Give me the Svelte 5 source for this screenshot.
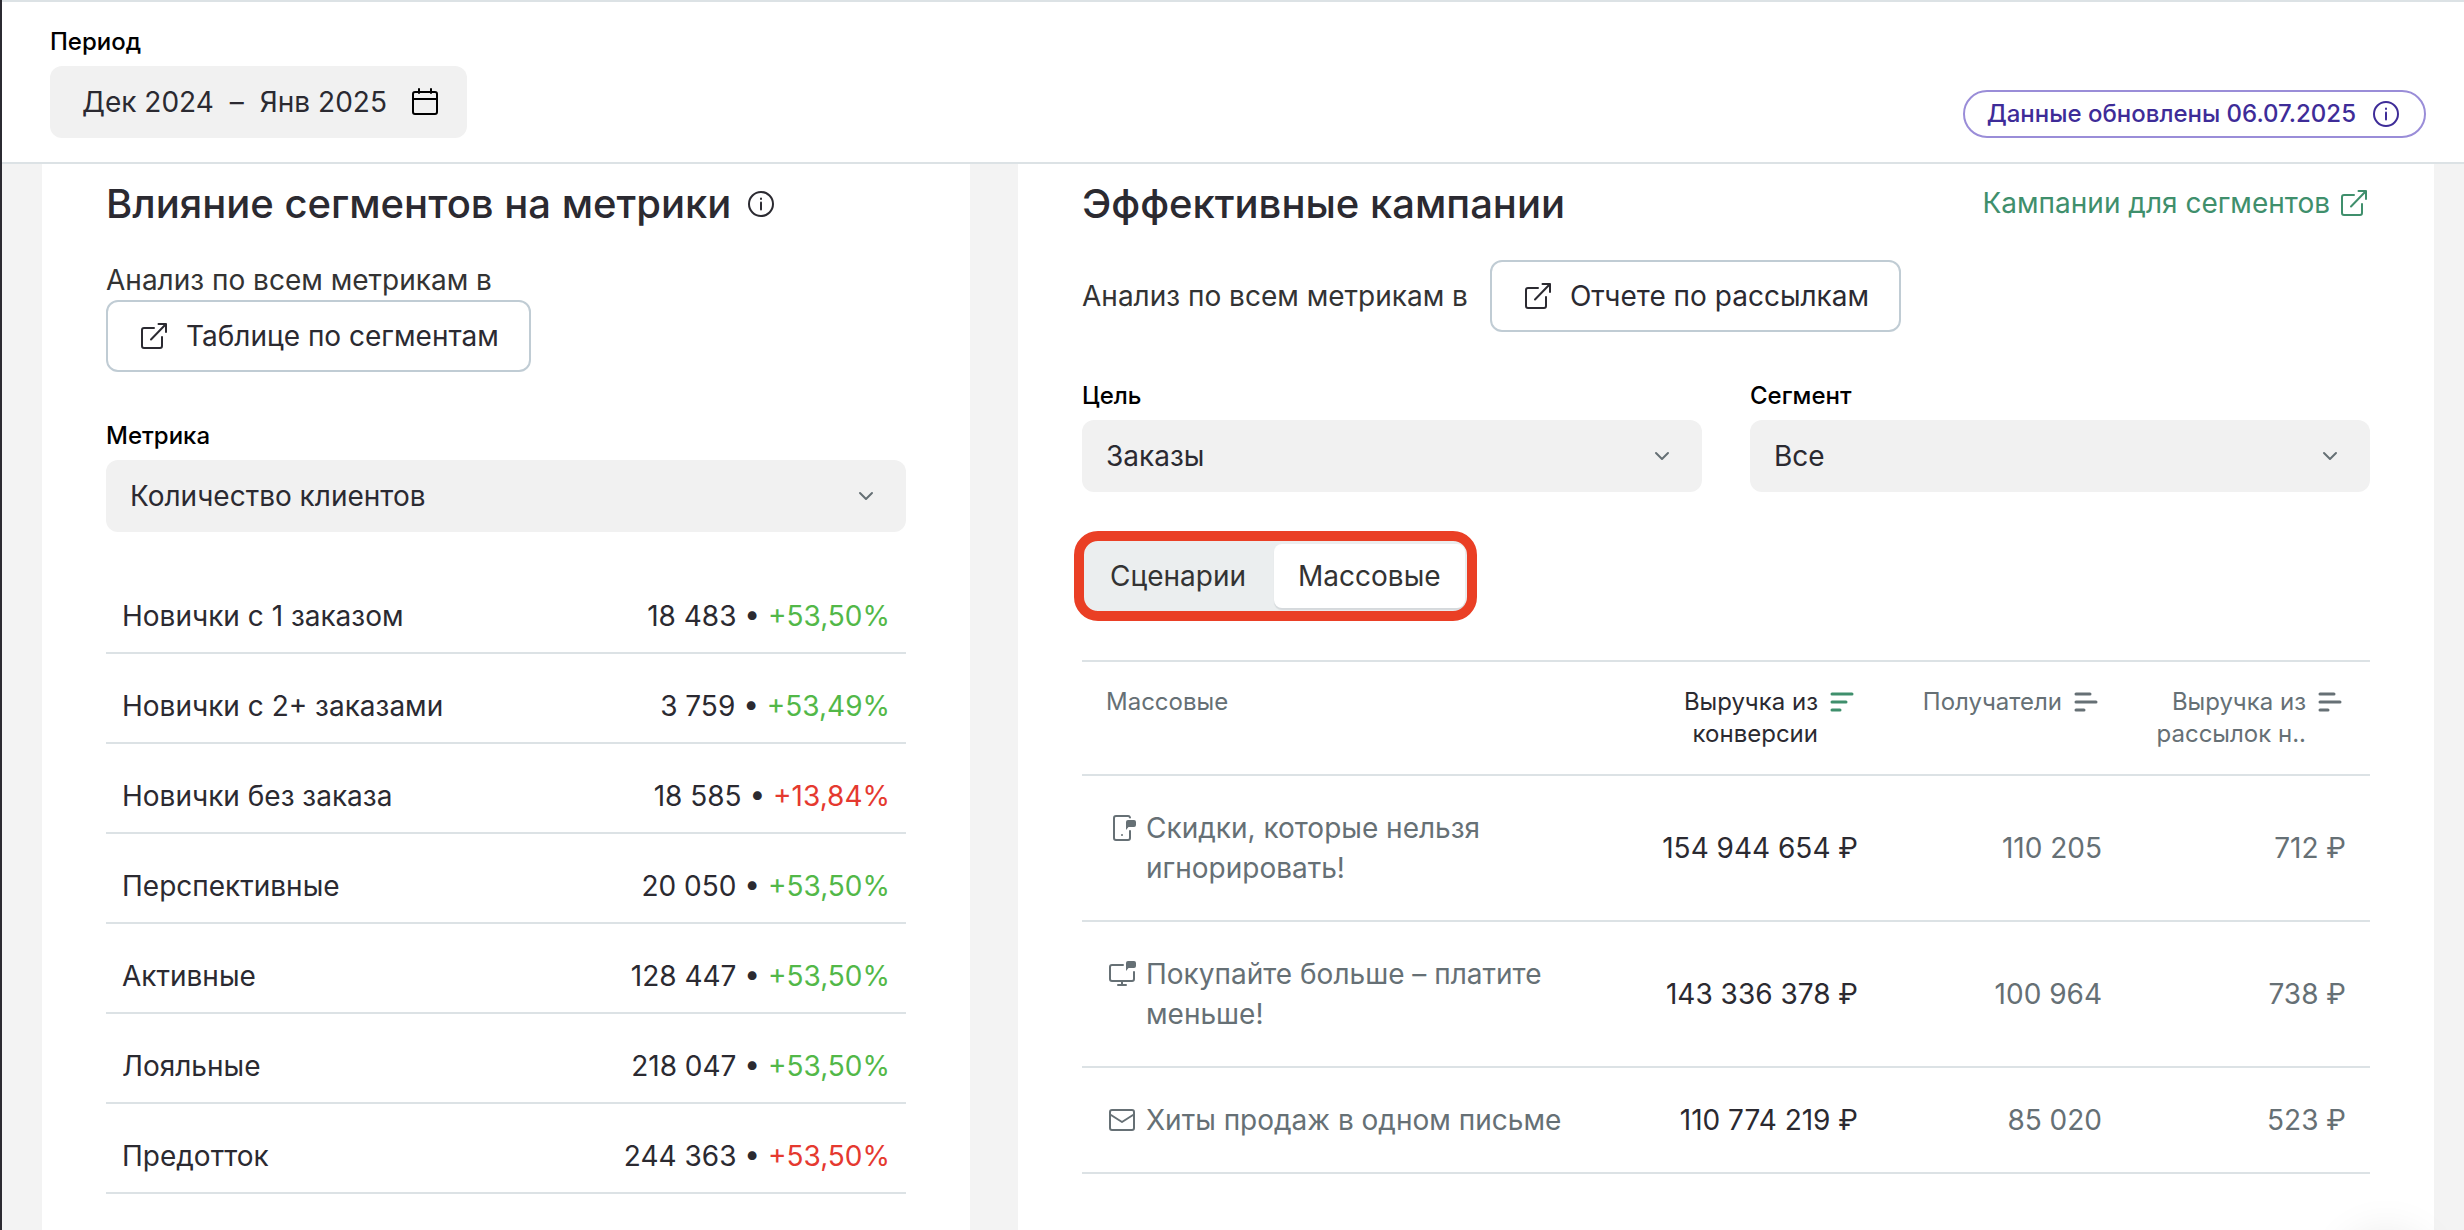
<script>
  let metric = $state('Количество клиентов');
  let goal = $state('Заказы');
  let segment = $state('Все');
  let tab = $state('Массовые');

  const tabs = ['Сценарии', 'Массовые'];

  const segments = [
    { name: 'Новички с 1 заказом', count: '18 483', change: '+53,50%', good: true },
    { name: 'Новички с 2+ заказами', count: '3 759', change: '+53,49%', good: true },
    { name: 'Новички без заказа', count: '18 585', change: '+13,84%', good: false },
    { name: 'Перспективные', count: '20 050', change: '+53,50%', good: true },
    { name: 'Активные', count: '128 447', change: '+53,50%', good: true },
    { name: 'Лояльные', count: '218 047', change: '+53,50%', good: true },
    { name: 'Предотток', count: '244 363', change: '+53,50%', good: false }
  ];

  const columns = [
    { title: 'Выручка из конверсии', active: true },
    { title: 'Получатели', active: false },
    { title: 'Выручка из рассылок н..', active: false }
  ];

  const campaigns = [
    { icon: 'mobile', name: 'Скидки, которые нельзя игнорировать!', revenue: '154 944 654 ₽', recipients: '110 205', perSend: '712 ₽' },
    { icon: 'web', name: 'Покупайте больше – платите меньше!', revenue: '143 336 378 ₽', recipients: '100 964', perSend: '738 ₽' },
    { icon: 'mail', name: 'Хиты продаж в одном письме', revenue: '110 774 219 ₽', recipients: '85 020', perSend: '523 ₽' }
  ];
</script>

{#snippet infoIcon()}
  <svg class="icon" viewBox="0 0 28 28" aria-hidden="true">
    <circle cx="14" cy="14" r="12" />
    <path d="M14 12.5v7" />
    <path d="M14 8.500v0.500" />
  </svg>
{/snippet}

{#snippet externalIcon()}
  <svg class="icon" viewBox="0 0 28 28" aria-hidden="true">
    <path d="M14 6H4a2 2 0 0 0-2 2v16a2 2 0 0 0 2 2h16a2 2 0 0 0 2-2V15" />
    <path d="M18.500 2H26v8M26 2L11 17.500" />
  </svg>
{/snippet}

{#snippet chevron()}
  <svg class="chevron" viewBox="0 0 16 16" aria-hidden="true"><path d="M2 5l6 6 6-6" /></svg>
{/snippet}

<div class="page">
  <header class="topbar">
    <div class="field">
      <label for="period">Период</label>
      <button id="period" class="period" type="button">
        <span>Дек 2024</span><span>–</span><span>Янв 2025</span>
        <svg class="icon calendar" viewBox="0 0 28 28" aria-hidden="true">
          <rect x="2" y="4" width="24" height="22" rx="2" />
          <path d="M2 11h24M8 1v4M20 1v4" />
        </svg>
      </button>
    </div>
    <div class="badge">
      <span>Данные обновлены 06.07.2025</span>
      {@render infoIcon()}
    </div>
  </header>

  <main>
    <section class="card">
      <div class="heading">
        <h2>Влияние сегментов на метрики</h2>
        {@render infoIcon()}
      </div>
      <div class="analysis stacked">
        <span>Анализ по всем метрикам в</span>
        <button class="outlined" type="button">{@render externalIcon()}Таблице по сегментам</button>
      </div>
      <div class="field">
        <label for="metric">Метрика</label>
        <div class="select">
          <select id="metric" bind:value={metric}><option>Количество клиентов</option></select>
          {@render chevron()}
        </div>
      </div>
      <ul class="segments">
        {#each segments as row}
          <li>
            <span>{row.name}</span>
            <span>{row.count} • <span class={row.good ? 'up' : 'down'}>{row.change}</span></span>
          </li>
        {/each}
      </ul>
    </section>

    <section class="card">
      <div class="heading spread">
        <h2>Эффективные кампании</h2>
        <a href="#campaigns">Кампании для сегментов {@render externalIcon()}</a>
      </div>
      <div class="analysis">
        <span>Анализ по всем метрикам в</span>
        <button class="outlined" type="button">{@render externalIcon()}Отчете по рассылкам</button>
      </div>
      <div class="filters">
        <div class="field">
          <label for="goal">Цель</label>
          <div class="select">
            <select id="goal" bind:value={goal}><option>Заказы</option></select>
            {@render chevron()}
          </div>
        </div>
        <div class="field">
          <label for="segment">Сегмент</label>
          <div class="select">
            <select id="segment" bind:value={segment}><option>Все</option></select>
            {@render chevron()}
          </div>
        </div>
      </div>
      <div class="tabs">
        {#each tabs as name}
          <button type="button" class:active={tab === name} aria-pressed={tab === name} onclick={() => (tab = name)}>{name}</button>
        {/each}
        <div class="marker"></div>
      </div>
      <table id="campaigns">
        <thead>
          <tr>
            <th class="name">Массовые</th>
            {#each columns as column}
              <th class:sorted={column.active}>
                <button class="sort" type="button">
                  <span>{column.title}</span>
                  <svg viewBox="0 0 32 32" aria-hidden="true">
                    <path d={column.active ? 'M6 8h20M6 16h14M6 24h8' : 'M6 8h14M6 16h20M6 24h8'} />
                  </svg>
                </button>
              </th>
            {/each}
          </tr>
        </thead>
        <tbody>
          {#each campaigns as row}
            <tr>
              <td>
                <div class="campaign">
                  <svg viewBox="0 0 32 32" aria-hidden="true">
                    {#if row.icon === 'mobile'}
                      <path d="M24 5.500a2 2 0 0 0-2-1.500H10a2 2 0 0 0-2 2v20a2 2 0 0 0 2 2h12a2 2 0 0 0 2-2V19" />
                      <circle class="dot" cx="16" cy="23" r="1" />
                      <path class="solid" d="M22 8h6a2 2 0 0 1 2 2v3a2 2 0 0 1-2 2h-5.500L20 18v-8a2 2 0 0 1 2-2z" />
                    {:else if row.icon === 'web'}
                      <path d="M17 7H6a2 2 0 0 0-2 2v12a2 2 0 0 0 2 2h20a2 2 0 0 0 2-2v-7M16 23v4M12 27h8" />
                      <path class="solid" d="M22 3h6a2 2 0 0 1 2 2v3a2 2 0 0 1-2 2h-5.500L20 13V5a2 2 0 0 1 2-2z" />
                    {:else}
                      <rect x="4" y="6" width="24" height="20" rx="2" />
                      <path d="M5 11l11 7 11-7" />
                    {/if}
                  </svg>
                  <span>{row.name}</span>
                </div>
              </td>
              <td class="main">{row.revenue}</td>
              <td>{row.recipients}</td>
              <td>{row.perSend}</td>
            </tr>
          {/each}
        </tbody>
      </table>
    </section>
  </main>
  <div class="launcher"></div>
</div>

<style>
  :global(body) {
    background: #f3f3f3;
    color: #2b2a31;
    font-family: Inter, 'Liberation Sans', sans-serif;
    font-size: 28px;
    line-height: 40px;
  }

  .page {
    box-sizing: border-box;
    display: flex;
    flex-direction: column;
    min-height: 100vh;
    border-left: 2px solid #2b2a31;
  }

  button,
  select {
    margin: 0;
    padding: 0;
    border: 0;
    background: none;
    color: inherit;
    font: inherit;
    cursor: pointer;
  }

  svg {
    flex: none;
    fill: none;
    stroke: currentColor;
    stroke-width: 2;
    stroke-linecap: round;
    stroke-linejoin: round;
  }

  .icon {
    width: 28px;
    height: 28px;
  }

  .topbar {
    display: flex;
    align-items: flex-end;
    justify-content: space-between;
    padding: 24px 38px 24px 48px;
    border-top: 2px solid #dce2e5;
    border-bottom: 2px solid #dce2e5;
    background: #fff;
  }

  .field {
    display: flex;
    flex-direction: column;
    gap: 8px;
  }

  label {
    color: #000;
    font-size: 24px;
    font-weight: 500;
    line-height: 32px;
  }

  .period {
    display: flex;
    align-items: center;
    gap: 16px;
    height: 72px;
    padding: 0 28px 0 32px;
    border-radius: 12px;
    background: #f1f1f1;
  }

  .calendar {
    margin-left: 8px;
    color: #000;
  }

  .badge {
    box-sizing: border-box;
    display: flex;
    align-items: center;
    gap: 16px;
    height: 48px;
    padding: 0 24px 0 22px;
    border: 2px solid #9a8dd8;
    border-radius: 24px;
    color: #3e2c98;
    font-size: 24px;
    font-weight: 500;
  }

  main {
    flex: 1;
    display: grid;
    grid-template-columns: 928fr 1416fr;
    gap: 48px;
    padding: 0 30px 0 40px;
  }

  .card {
    display: flex;
    flex-direction: column;
    min-width: 0;
    padding: 16px 64px 32px;
    background: #fff;
  }

  .heading {
    display: flex;
    align-items: center;
    gap: 16px;
  }

  .spread {
    justify-content: space-between;
  }

  h2 {
    margin: 0;
    font-size: 40px;
    font-weight: 500;
    line-height: 48px;
  }

  a {
    display: flex;
    align-items: center;
    gap: 10px;
    padding: 0 2px 2px 0;
    color: #3f8f6c;
    text-decoration: none;
  }

  .analysis {
    display: flex;
    align-items: center;
    gap: 22px;
    margin: 32px 0 48px;
    color: #333;
  }

  .stacked {
    flex-direction: column;
    align-items: flex-start;
    gap: 0;
  }

  .outlined {
    box-sizing: border-box;
    display: flex;
    align-items: center;
    gap: 18px;
    height: 72px;
    padding: 0 30px 0 32px;
    border: 2px solid #c0ccd4;
    border-radius: 12px;
    color: #2b2a31;
  }

  .select {
    display: grid;
    align-items: center;
  }

  .select > :global(*) {
    grid-area: 1 / 1;
  }

  select {
    appearance: none;
    width: 100%;
    height: 72px;
    padding: 0 64px 0 24px;
    border-radius: 12px;
    background: #f1f1f1;
  }

  .chevron {
    justify-self: end;
    width: 16px;
    height: 16px;
    margin-right: 32px;
    color: #667075;
    pointer-events: none;
  }

  .segments {
    margin: 32px 0 0;
    padding: 0;
    list-style: none;
  }

  .segments li {
    display: flex;
    justify-content: space-between;
    padding: 32px 16px 16px;
    border-bottom: 2px solid #dce2e5;
  }

  .up {
    color: #52b848;
  }

  .down {
    color: #e5392f;
  }

  .filters {
    display: grid;
    grid-template-columns: 1fr 1fr;
    gap: 48px;
  }

  .tabs {
    position: relative;
    display: flex;
    align-self: flex-start;
    gap: 4px;
    margin: 48px 0;
    padding: 4px;
    border-radius: 12px;
    background: #ebeeef;
    color: #333;
  }

  .tabs button {
    height: 64px;
    padding: 0 24px;
    border-radius: 8px;
  }

  .tabs .active {
    background: #fff;
    box-shadow: 0 2px 1px #d5d9dc;
  }

  .marker {
    position: absolute;
    inset: -9px -8px;
    border: 10px solid #ea3f25;
    border-radius: 24px;
    pointer-events: none;
  }

  table {
    width: 100%;
    border-top: 2px solid #dce2e5;
    border-spacing: 0;
    table-layout: fixed;
    color: #667075;
  }

  th,
  td {
    padding: 32px 24px;
    border-bottom: 2px solid #dce2e5;
    font-weight: 400;
    text-align: right;
    white-space: nowrap;
  }

  th {
    width: 196px;
    padding: 24px;
    font-size: 24px;
    line-height: 32px;
    vertical-align: top;
  }

  .name {
    width: auto;
    text-align: left;
  }

  .sort {
    display: flex;
    align-items: flex-start;
    justify-content: flex-end;
    gap: 8px;
    width: 100%;
    text-align: right;
    white-space: normal;
  }

  .sort svg {
    width: 32px;
    height: 32px;
    stroke-width: 3;
  }

  .sorted,
  .main {
    color: #2b2a31;
  }

  .sorted svg {
    color: #3f8f6c;
  }

  .campaign {
    display: flex;
    gap: 8px;
    text-align: left;
    white-space: normal;
  }

  .campaign svg {
    width: 32px;
    height: 32px;
    margin-top: 4px;
  }

  .solid,
  .dot {
    fill: currentColor;
    stroke: none;
  }

  /* Chat launcher parked below the fold; only its soft shadow reaches the view */
  .launcher {
    position: fixed;
    top: 100%;
    right: 30px;
    width: 96px;
    height: 96px;
    border-radius: 50%;
    box-shadow: 0 0 40px rgb(0 0 0 / 8%);
    pointer-events: none;
  }
</style>
